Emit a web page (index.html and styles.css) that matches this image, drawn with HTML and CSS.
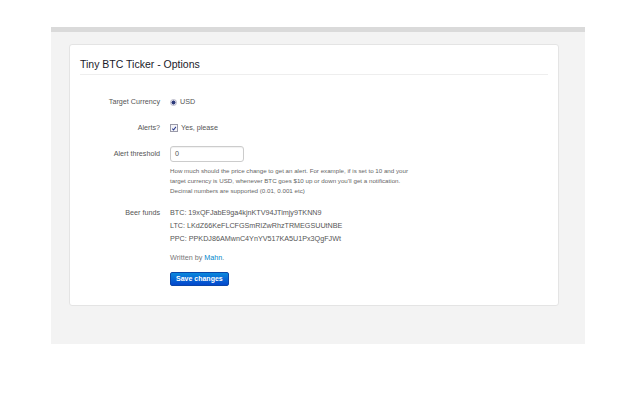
FILE: index.html
```html
<!DOCTYPE html>
<html>
<head>
<meta charset="utf-8">
<title>Tiny BTC Ticker - Options</title>
<link rel="stylesheet" href="styles.css">
</head>
<body>
<div class="frame">
  <div class="card">
    <h1 class="title">Tiny BTC Ticker - Options</h1>
    <form class="form">
      <div class="group">
        <div class="label">Target Currency</div>
        <div class="control">
          <span class="radio"></span><span>USD</span>
        </div>
      </div>
      <div class="group">
        <div class="label">Alerts?</div>
        <div class="control">
          <span class="check"><svg width="7" height="7" viewBox="0 0 7 7"><path d="M1.5 3.6 L3 5.2 L5.7 1.6" fill="none" stroke="#2a3b8f" stroke-width="1.2"/></svg></span><span>Yes, please</span>
        </div>
      </div>
      <div class="group group-input">
        <div class="label">Alert threshold</div>
        <div class="control column">
          <div class="input">0</div>
          <p class="help">How much should the price change to get an alert. For example, if is set to 10 and your target currency is USD, whenever BTC goes $10 up or down you'll get a notification. Decimal numbers are supported (0.01, 0.001 etc)</p>
        </div>
      </div>
      <div class="group group-funds">
        <div class="label">Beer funds</div>
        <div class="control column funds">
          <div>BTC: 19xQFJabE9ga4kjnKTV94JTimjy9TKNN9</div>
          <div>LTC: LKdZ66KeFLCFGSmRlZwRhzTRMEGSUUtNBE</div>
          <div>PPC: PPKDJ86AMwnC4YnYV517KA5U1Px3QgFJWt</div>
        </div>
      </div>
      <div class="group group-author">
        <div class="label"></div>
        <div class="control column">
          <div class="author">Written by <a class="link">Mahn</a>.</div>
          <div><span class="btn">Save changes</span></div>
        </div>
      </div>
    </form>
  </div>
</div>
</body>
</html>
```
FILE: styles.css
```css
html, body {
  margin: 0;
  padding: 0;
  background: #fff;
}
body {
  font-family: "Liberation Sans", Arial, sans-serif;
  font-size: 7.2px;
  color: #555;
}
.frame {
  margin: 27px 0 0 51px;
  width: 534px;
  height: 317px;
  background: #f3f3f3;
  border-top: 5px solid #dadada;
  padding: 12px 26px 0 18px;
  box-sizing: border-box;
}
.card {
  background: #fff;
  border: 1px solid #e4e4e4;
  border-radius: 3px;
  padding: 12px 10px 19px 10px;
  height: 262px;
  box-sizing: border-box;
}
.title {
  margin: 0;
  font-size: 10.5px;
  font-weight: normal;
  line-height: 15px;
  color: #1a1a2a;
  padding-bottom: 2px;
  border-bottom: 1px solid #eeeeee;
}
.form {
  margin: 19px 0 0 0;
}
.group {
  display: grid;
  grid-template-columns: 80px 1fr;
  column-gap: 10px;
  margin-bottom: 10px;
  line-height: 16px;
}
.label {
  text-align: right;
  color: #555;
  line-height: 16px;
}
.control {
  display: flex;
  align-items: center;
  height: 16px;
}
.control.column {
  flex-direction: column;
  align-items: flex-start;
  height: auto;
}
.radio {
  width: 5px;
  height: 5px;
  border-radius: 50%;
  border: 1px solid #b8b8c8;
  background: radial-gradient(circle, #2c3a7a 0 1.8px, #dde 2.2px);
  margin-right: 3px;
}
.check {
  width: 6px;
  height: 6px;
  border: 1px solid #9a9aa8;
  background: #f4f4f8;
  margin-right: 3px;
  display: flex;
  align-items: center;
  justify-content: center;
}
.check svg {
  display: block;
}
.input {
  width: 74px;
  height: 16px;
  box-sizing: border-box;
  border: 1px solid #cccccc;
  border-radius: 3px;
  padding: 0 4px;
  line-height: 14px;
  color: #555;
  box-shadow: inset 0 1px 1px rgba(0,0,0,0.06);
}
.help {
  margin: 4px 0 0 0;
  font-size: 6.2px;
  line-height: 10px;
  width: 240px;
  color: #666;
}
.group-funds {
  margin-bottom: 6px;
}
.group-funds .label {
  line-height: 13px;
}
.funds {
  line-height: 13px;
  color: #555;
}
.group-author {
  margin-bottom: 0;
}
.author {
  line-height: 13px;
  color: #777;
}
.link {
  color: #0088cc;
}
.btn {
  display: inline-block;
  margin-top: 8px;
  height: 14px;
  line-height: 12px;
  padding: 0 5px;
  font-weight: bold;
  font-size: 7px;
  white-space: nowrap;
  color: #fff;
  border-radius: 2px;
  border: 1px solid #0a46a8;
  background: linear-gradient(#0a88dd, #0447cc);
  box-sizing: border-box;
}
```
